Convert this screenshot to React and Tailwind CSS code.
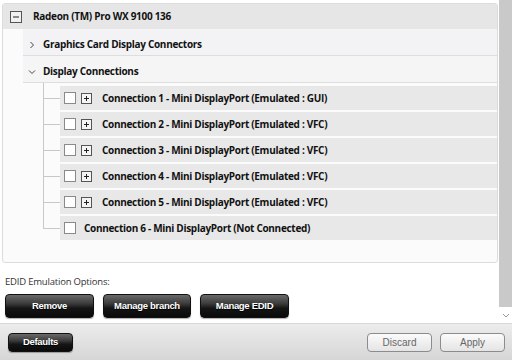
import React from "react";

const conns = [
  "Connection 1 - Mini DisplayPort (Emulated : GUI)",
  "Connection 2 - Mini DisplayPort (Emulated : VFC)",
  "Connection 3 - Mini DisplayPort (Emulated : VFC)",
  "Connection 4 - Mini DisplayPort (Emulated : VFC)",
  "Connection 5 - Mini DisplayPort (Emulated : VFC)",
];

function PlusBox() {
  return (
    <svg width="11" height="11" viewBox="0 0 11 11" className="shrink-0">
      <rect x="0.5" y="0.5" width="10" height="10" fill="#f4f4f4" stroke="#555" />
      <path d="M3 5.5h5M5.5 3v5" stroke="#222" strokeWidth="1" />
    </svg>
  );
}

function Check() {
  return <div className="w-[12px] h-[12px] border border-[#8a8a8a] bg-white shrink-0" />;
}

function DarkBtn({ children, className = "" }) {
  return (
    <div
      className={
        "flex items-center justify-center rounded-[4px] border border-[#111] bg-[linear-gradient(#6a6a6a_0%,#3a3a3a_40%,#151515_60%,#0a0a0a_100%)] text-white font-bold text-[9.5px] tracking-[-0.3px] [text-shadow:0_1px_1px_#000] shadow-[0_1px_1px_rgba(0,0,0,0.3)] " +
        className
      }
      style={{ fontFamily: '"Liberation Sans", Arial, sans-serif' }}
    >
      {children}
    </div>
  );
}

function LightBtn({ children }) {
  return (
    <div
      className="w-[65px] h-[19px] flex items-center justify-center rounded-[4px] border border-[#8c8c8c] bg-[linear-gradient(#fbfbfb,#e4e4e4)] text-[#666] text-[10px]"
      style={{ fontFamily: '"Liberation Sans", Arial, sans-serif' }}
    >
      {children}
    </div>
  );
}

const T = "text-[10px] font-bold text-[#111] tracking-[-0.3px]";

export default function App() {
  const f = { fontFamily: '"Open Sans", "Noto Sans", sans-serif' };
  return (
    <div className="w-[512px] h-[360px] bg-white flex flex-col overflow-hidden" style={f}>
      <div className="flex h-[323px]">
        <div className="flex-1 flex flex-col">
          <div className="pt-[3px] pl-[2px] pr-[1px]">
            <div className="rounded-[3px] border border-[#dcdcdc] bg-[#fbfbfb] h-[260px] overflow-hidden">
              <div className="h-[25px] bg-[#e6e6e6] flex items-center pl-[7px] gap-[11px]">
                <svg width="12" height="12" viewBox="0 0 12 12">
                  <rect x="0.5" y="0.5" width="11" height="11" fill="#f0f0f0" stroke="#555" />
                  <path d="M3 6h6" stroke="#222" />
                </svg>
                <span className={T}>Radeon (TM) Pro WX 9100 136</span>
              </div>
              <div className="ml-[20px] h-[27px] bg-[#f3f3f5] border-b border-[#dedede] flex items-center pl-[6px] pt-[5px] gap-[8px]">
                <svg width="6" height="8" viewBox="0 0 6 8"><path d="M1.5 1l3 3-3 3" fill="none" stroke="#444" /></svg>
                <span className={T}>Graphics Card Display Connectors</span>
              </div>
              <div className="ml-[20px] h-[27px] bg-[#f5f5f6] border-b border-[#dedede] flex items-center pl-[5px] pt-[5px] gap-[7px]">
                <svg width="8" height="6" viewBox="0 0 8 6"><path d="M1 1.5l3 3 3-3" fill="none" stroke="#444" /></svg>
                <span className={T}>Display Connections</span>
              </div>
              <div className="relative ml-[40px] pt-[3px] flex flex-col gap-[2px]">
                <div className="absolute left-[0px] top-0 h-[146px] w-px bg-[#c8c8c8]" />
                {[...conns, null].map((c, i) => (
                  <div key={i} className="relative h-[24px] ml-[17px] bg-[#e8e8e8] flex items-center pl-[4px]">
                    <div className="absolute left-[-17px] top-[12px] w-[17px] h-px bg-[#c8c8c8]" />
                    <Check />
                    {c ? (
                      <>
                        <div className="ml-[5px]"><PlusBox /></div>
                        <span className={"ml-[10px] " + T}>{c}</span>
                      </>
                    ) : (
                      <span className={"ml-[8px] " + T}>Connection 6 - Mini DisplayPort (Not Connected)</span>
                    )}
                  </div>
                ))}
              </div>
            </div>
          </div>
          <div className="pl-[5px] pt-[12px] text-[9.5px] text-[#333] tracking-[-0.2px]">EDID Emulation Options:</div>
          <div className="flex gap-[9px] pl-[5px] pt-[5px]">
            <DarkBtn className="w-[89px] h-[24px]">Remove</DarkBtn>
            <DarkBtn className="w-[88px] h-[24px]">Manage branch</DarkBtn>
            <DarkBtn className="w-[89px] h-[24px]">Manage EDID</DarkBtn>
          </div>
        </div>
        <div className="w-[13px] flex flex-col">
          <div className="h-[307px] bg-[#c9c9c9]" />
          <div className="flex-1 flex items-center justify-center">
            <svg width="8" height="5" viewBox="0 0 8 5"><path d="M1 1l3 3 3-3" fill="none" stroke="#999" /></svg>
          </div>
        </div>
      </div>
      <div className="flex-1 bg-[linear-gradient(#ececec,#d6d6d6)] border-t border-[#d8d8d8] flex items-center px-[8px]">
        <DarkBtn className="w-[65px] h-[19px]">Defaults</DarkBtn>
        <div className="flex-1" />
        <div className="flex gap-[8px] mr-[-1px]">
          <LightBtn>Discard</LightBtn>
          <LightBtn>Apply</LightBtn>
        </div>
      </div>
    </div>
  );
}
